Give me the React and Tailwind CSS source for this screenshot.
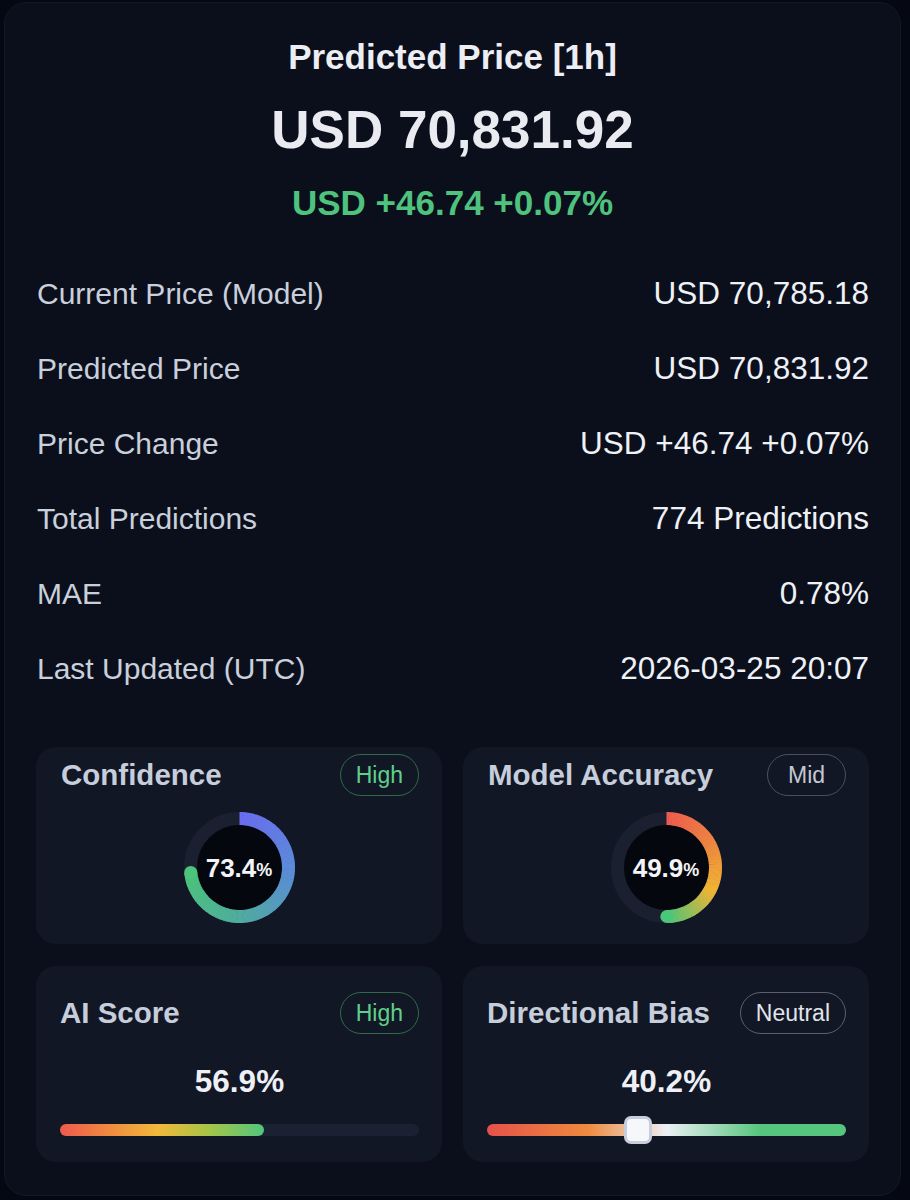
import React from "react";

const FONT = { fontFamily: '"Liberation Sans", Arial, Helvetica, sans-serif' };

const rows = [
  ["Current Price (Model)", "USD 70,785.18"],
  ["Predicted Price", "USD 70,831.92"],
  ["Price Change", "USD +46.74 +0.07%"],
  ["Total Predictions", "774 Predictions"],
  ["MAE", "0.78%"],
  ["Last Updated (UTC)", "2026-03-25 20:07"],
];

function hex(c) {
  return [1, 3, 5].map((i) => parseInt(c.slice(i, i + 2), 16));
}

function mix(stops, t) {
  let i = 0;
  while (i < stops.length - 2 && t > stops[i + 1][0]) i++;
  const [p0, c0] = stops[i];
  const [p1, c1] = stops[i + 1];
  const k = Math.min(1, Math.max(0, (t - p0) / (p1 - p0 || 1)));
  const a = hex(c0);
  const b = hex(c1);
  const out = a.map((v, j) => Math.round(v + (b[j] - v) * k));
  return `rgb(${out.join(",")})`;
}

function Ring({ value, stops }) {
  const size = 111;
  const c = size / 2;
  const r = 49;
  const sweep = (value / 100) * 360;
  const n = 90;
  const pt = (deg) => {
    const a = (deg * Math.PI) / 180;
    return [c + r * Math.sin(a), c - r * Math.cos(a)];
  };
  const segs = [];
  for (let i = 0; i < n; i++) {
    const a0 = (i / n) * sweep;
    const a1 = Math.min(sweep, ((i + 1) / n) * sweep + 0.6);
    const [x0, y0] = pt(a0);
    const [x1, y1] = pt(a1);
    segs.push(
      <path
        key={i}
        d={`M ${x0} ${y0} A ${r} ${r} 0 0 1 ${x1} ${y1}`}
        stroke={mix(stops, (i + 0.5) / n)}
        strokeWidth="13"
        fill="none"
      />
    );
  }
  const [ex, ey] = pt(sweep);
  const [whole, dec] = value.toFixed(1).split(".");
  return (
    <div className="relative w-[111px] h-[111px]">
      <svg width={size} height={size} viewBox={`0 0 ${size} ${size}`}>
        <circle cx={c} cy={c} r={r} stroke="#1a2030" strokeWidth="13" fill="none" />
        <circle cx={c} cy={c} r="42.5" fill="#05070f" />
        {segs}
        <circle cx={ex} cy={ey} r="6.5" fill={mix(stops, 1)} />
      </svg>
      <div className="absolute inset-0 flex items-center justify-center text-[#f3f4f7] font-bold">
        <span className="text-[26px] leading-none">{whole}.{dec}</span>
        <span className="text-[18px] leading-none mt-[4px]">%</span>
      </div>
    </div>
  );
}

function Badge({ tone, children }) {
  const cls =
    tone === "green"
      ? "border-[#2f6a49] text-[#5fd08a]"
      : tone === "mid"
      ? "border-[#4a5060] text-[#c3c8d2]"
      : "border-[#5a606e] text-[#e0e4eb]";
  return (
    <span
      className={`h-[42px] min-w-[79px] px-[15px] rounded-full border-[1.5px] flex items-center justify-center text-[23px] ${cls}`}
    >
      {children}
    </span>
  );
}

function Header({ title, badge, tone }) {
  return (
    <div className="h-[42px] flex items-center justify-between">
      <span className="text-[29.5px] font-bold text-[#c6cddb]">{title}</span>
      <Badge tone={tone}>{badge}</Badge>
    </div>
  );
}

function GaugeCard({ title, badge, tone, value, stops }) {
  return (
    <div className="bg-[#121725] rounded-[20px] pl-[25px] pr-[23px] pt-[7px] pb-[21px]">
      <Header title={title} badge={badge} tone={tone} />
      <div className="mt-[16px] flex justify-center pr-[2px]">
        <Ring value={value} stops={stops} />
      </div>
    </div>
  );
}

function BarCard({ title, badge, tone, value, slider }) {
  return (
    <div className="bg-[#121725] rounded-[20px] pl-[24px] pr-[23px] pt-[26px] pb-[26px]">
      <Header title={title} badge={badge} tone={tone} />
      <div className="mt-[29px] text-center text-[31.5px] leading-[36px] font-bold text-[#eef0f5]">
        {value.toFixed(1)}%
      </div>
      {slider ? (
        <div className="relative mt-[25px] h-[12px] rounded-full bg-[linear-gradient(to_right,#e4524a_0%,#ee8a3e_28%,#eceff4_50%,#56c67e_76%,#56c67e_100%)]">
          <div
            className="absolute top-[-8px] w-[28px] h-[28px] rounded-[7px] bg-[#f5f7fb] border-[3px] border-[#c7cedb]"
            style={{ left: `calc(${value}% - 7px)` }}
          />
        </div>
      ) : (
        <div className="mt-[25px] h-[12px] rounded-full bg-[#1a2133]">
          <div
            className="h-full rounded-full bg-[linear-gradient(to_right,#ee5a4e_0%,#ef8c3f_25%,#f2b93b_48%,#a9c446_72%,#52c67c_100%)]"
            style={{ width: `${value}%` }}
          />
        </div>
      )}
    </div>
  );
}

export default function App() {
  return (
    <div className="min-h-screen bg-[#050812] pt-[2px] pl-[4px] pb-[3px]" style={FONT}>
      <div className="w-[897px] rounded-[22px] bg-[#0b0f1c] border border-[#131827] px-[31px] pt-[34px] pb-[33px]">
        <div className="text-center text-[35px] leading-[40px] font-bold text-[#eceef3]">Predicted Price [1h]</div>
        <div className="mt-[23px] text-center text-[53px] leading-[60px] font-bold text-[#e9ebf0]">USD 70,831.92</div>
        <div className="mt-[23px] text-center text-[35px] leading-[40px] font-bold text-[#4fc27e]">USD +46.74 +0.07%</div>

        <div className="mt-[33px]">
          {rows.map(([k, v]) => (
            <div key={k} className="h-[75px] flex items-center justify-between">
              <span className="text-[30px] text-[#c9d0dc] pl-[1px]">{k}</span>
              <span className="text-[31.5px] text-[#eef1f5]">{v}</span>
            </div>
          ))}
        </div>

        <div className="mt-[41px] grid grid-cols-2 gap-x-[21px] gap-y-[22px]">
          <GaugeCard
            title="Confidence"
            badge="High"
            tone="green"
            value={73.4}
            stops={[
              [0, "#6a6cf0"],
              [0.35, "#5b8cd8"],
              [0.7, "#4fae9c"],
              [1, "#4cc47a"],
            ]}
          />
          <GaugeCard
            title="Model Accuracy"
            badge="Mid"
            tone="mid"
            value={49.9}
            stops={[
              [0, "#ef5b50"],
              [0.35, "#ee8840"],
              [0.65, "#f2b534"],
              [1, "#4cc67a"],
            ]}
          />
          <BarCard title="AI Score" badge="High" tone="green" value={56.9} />
          <BarCard title="Directional Bias" badge="Neutral" tone="neutral" value={40.2} slider />
        </div>
      </div>
    </div>
  );
}
